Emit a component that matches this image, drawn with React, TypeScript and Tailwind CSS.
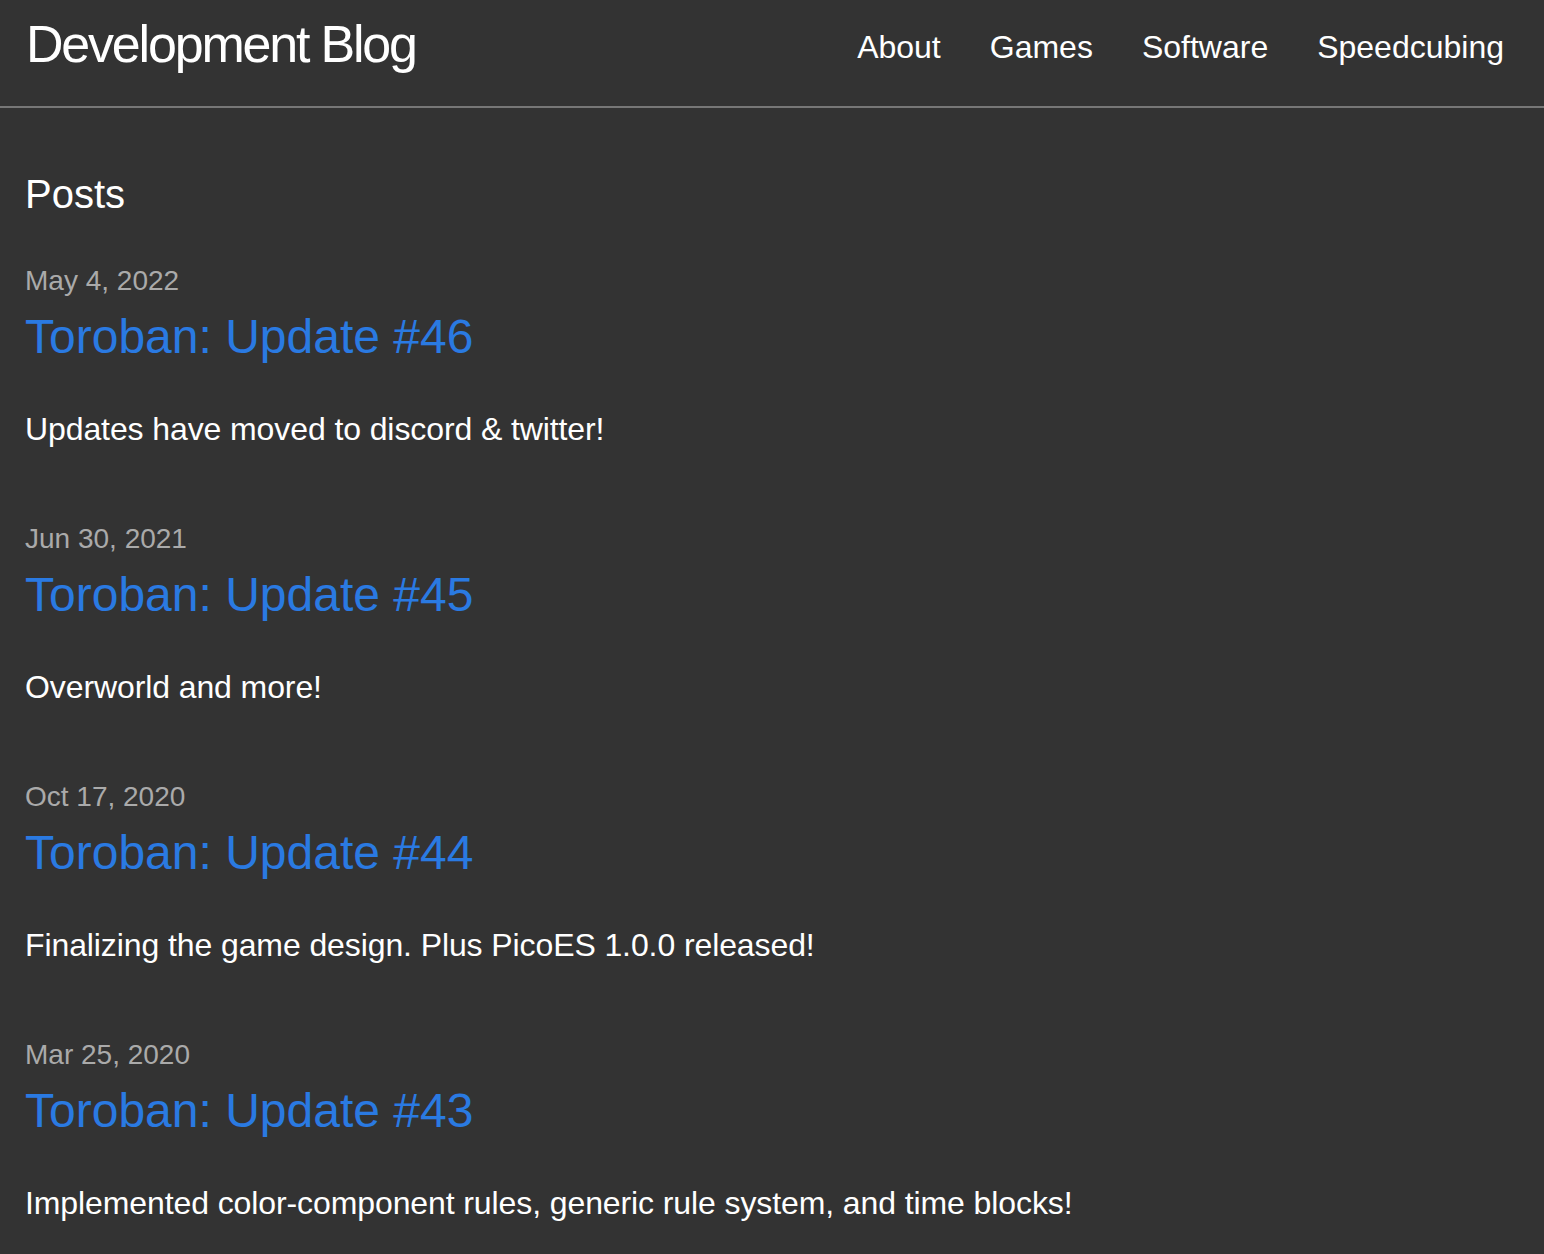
const navLinks = ['About', 'Games', 'Software', 'Speedcubing'];

const posts = [
  { date: 'May 4, 2022', title: 'Toroban: Update #46', excerpt: 'Updates have moved to discord & twitter!' },
  { date: 'Jun 30, 2021', title: 'Toroban: Update #45', excerpt: 'Overworld and more!' },
  { date: 'Oct 17, 2020', title: 'Toroban: Update #44', excerpt: 'Finalizing the game design. Plus PicoES 1.0.0 released!' },
  { date: 'Mar 25, 2020', title: 'Toroban: Update #43', excerpt: 'Implemented color-component rules, generic rule system, and time blocks!' },
];

export default function App() {
  return (
    <div className="min-h-screen bg-[#333333] text-white font-['Liberation_Sans',Arial,sans-serif]">
      {/* Site header */}
      <header className="flex h-[108px] items-start justify-between border-b-2 border-[#777777] pl-[26px] pr-[40px]">
        <a href="#" className="pt-[18px] text-[52px] leading-none tracking-[-2.2px] text-white">
          Development Blog
        </a>
        <nav className="flex gap-[49px] pt-[31px] text-[32px] leading-none">
          {navLinks.map((l) => (
            <a key={l} href="#" className="text-white">
              {l}
            </a>
          ))}
        </nav>
      </header>

      {/* Post list */}
      <main className="px-[25px]">
        <h2 className="mt-[66px] text-[40px] leading-none">Posts</h2>
        <ul className="mt-[53px]">
          {posts.map((p) => (
            <li key={p.title} className="mb-[80px]">
              <div className="text-[28px] leading-[28px] text-[#aaaaaa]">{p.date}</div>
              <h3 className="mt-[18px] text-[48px] leading-[48px]">
                <a href="#" className="text-[#2a7ae2]">
                  {p.title}
                </a>
              </h3>
              <p className="mt-[52px] text-[32px] leading-[32px] tracking-[-0.1px]">{p.excerpt}</p>
            </li>
          ))}
        </ul>
      </main>
    </div>
  );
}
